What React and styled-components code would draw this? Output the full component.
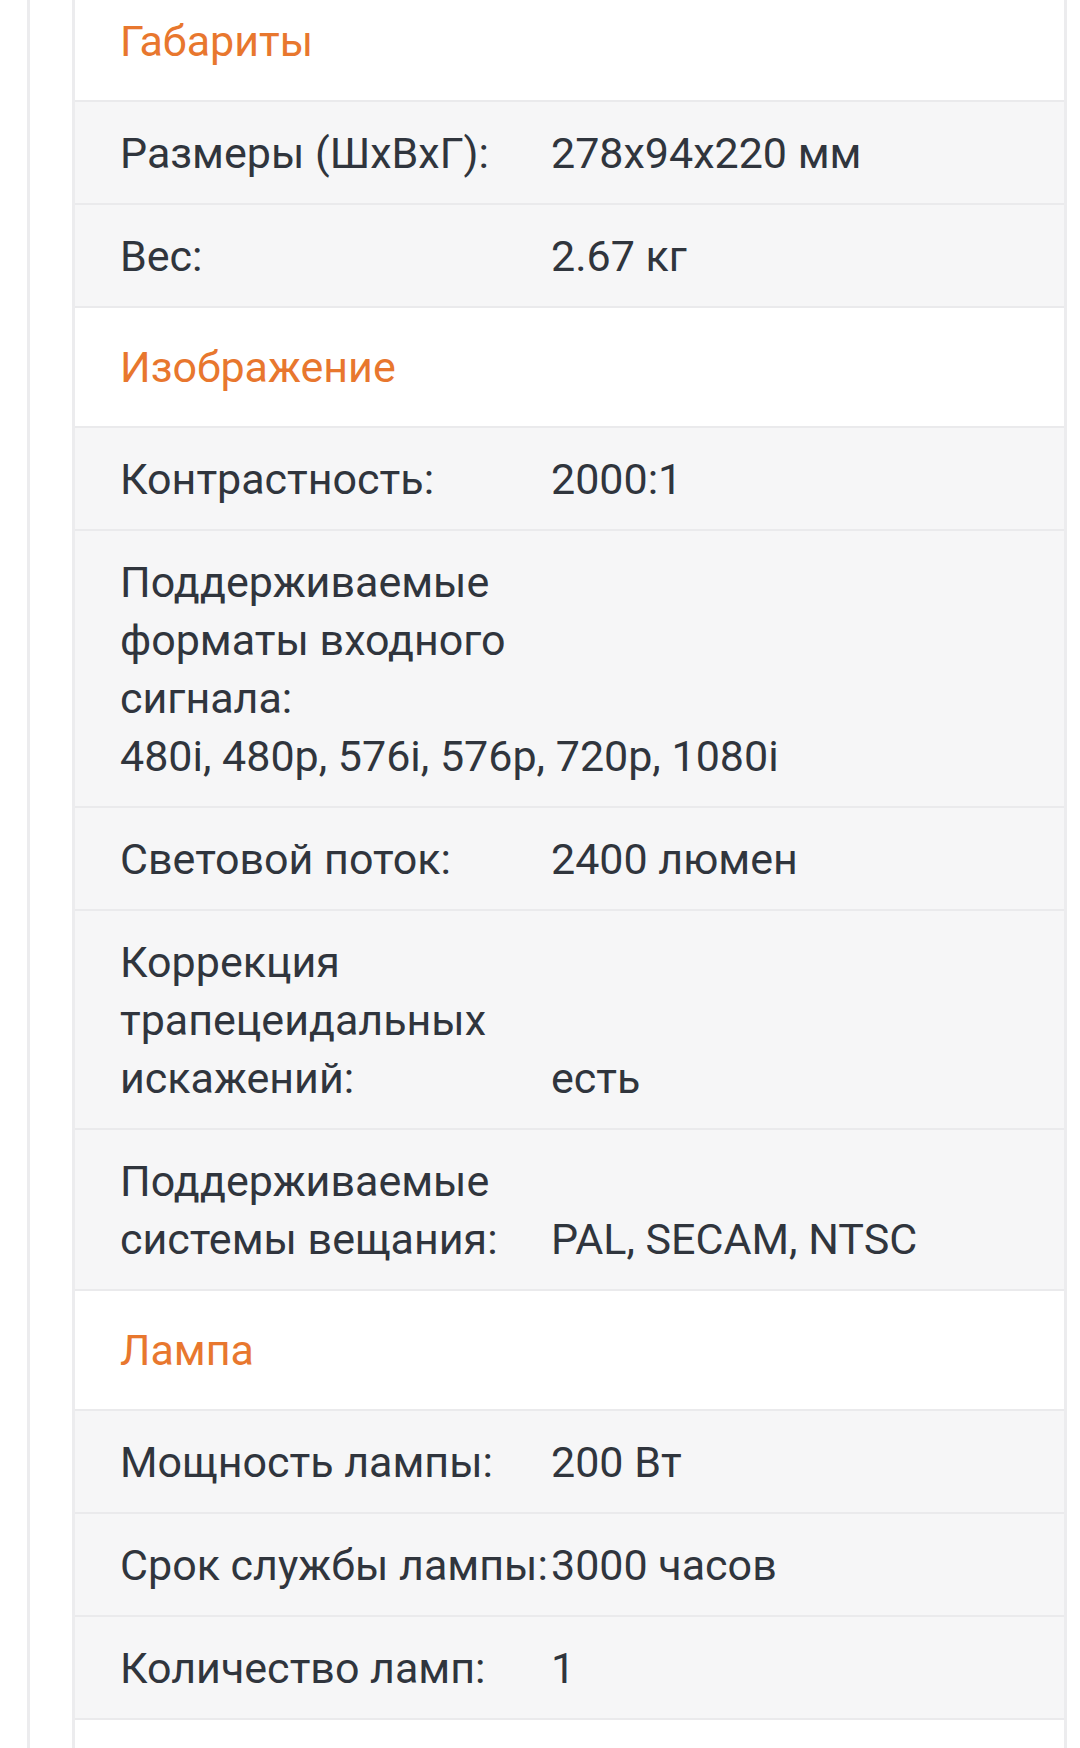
import styled, { createGlobalStyle } from "styled-components";

const GlobalStyle = createGlobalStyle`
  html, body {
    margin: 0;
    padding: 0;
    background: #fff;
  }
  body {
    font-family: Roboto, "Noto Sans", Arial, sans-serif;
    overflow: hidden;
  }
`;

const Page = styled.div`
  height: 1748px;
  padding-left: 27px;
  overflow: hidden;
`;

const Rail = styled.div`
  margin-top: -18px;
  border-left: 3px solid #ececee;
  padding-left: 42px;
  min-height: 1800px;
`;

const SpecTable = styled.div`
  width: 995px;
  box-sizing: border-box;
  border-left: 3px solid #ececee;
  border-right: 3px solid #ececee;
`;

const SectionTitle = styled.div`
  padding: 30px 45px;
  min-height: 58px;
  line-height: 58px;
  font-size: 43px;
  font-weight: 400;
  color: #e8772e;
  background: #fff;
  border-bottom: 2px solid #eaeaec;
`;

const SpecRow = styled.div`
  padding: 21.5px 45px;
  line-height: 58px;
  font-size: 43px;
  color: #30353d;
  background: #f6f6f7;
  border-bottom: 2px solid #eaeaec;
`;

const SpecLabel = styled.span`
  display: inline-block;
  width: 431px;
  vertical-align: baseline;
`;

const SpecValue = styled.span`
  display: inline-block;
  vertical-align: baseline;
`;

const sections = [
  {
    title: "Габариты",
    rows: [
      ["Размеры (ШхВхГ):", "278x94x220 мм"],
      ["Вес:", "2.67 кг"],
    ],
  },
  {
    title: "Изображение",
    rows: [
      ["Контрастность:", "2000:1"],
      ["Поддерживаемые форматы входного сигнала:", "480i, 480p, 576i, 576p, 720p, 1080i"],
      ["Световой поток:", "2400 люмен"],
      ["Коррекция трапецеидальных искажений:", "есть"],
      ["Поддерживаемые системы вещания:", "PAL, SECAM, NTSC"],
    ],
  },
  {
    title: "Лампа",
    rows: [
      ["Мощность лампы:", "200 Вт"],
      ["Срок службы лампы:", "3000 часов"],
      ["Количество ламп:", "1"],
    ],
  },
];

const App = () => {
  return (
    <>
      <GlobalStyle />
      <Page>
        <Rail>
          <SpecTable>
            {sections.map((section) => (
              <div key={section.title}>
                <SectionTitle>{section.title}</SectionTitle>
                {section.rows.map(([label, value]) => (
                  <SpecRow key={label}>
                    <SpecLabel>{label}</SpecLabel>
                    <SpecValue>{value}</SpecValue>
                  </SpecRow>
                ))}
              </div>
            ))}
            <SectionTitle>&nbsp;</SectionTitle>
          </SpecTable>
        </Rail>
      </Page>
    </>
  );
};

export default App;
